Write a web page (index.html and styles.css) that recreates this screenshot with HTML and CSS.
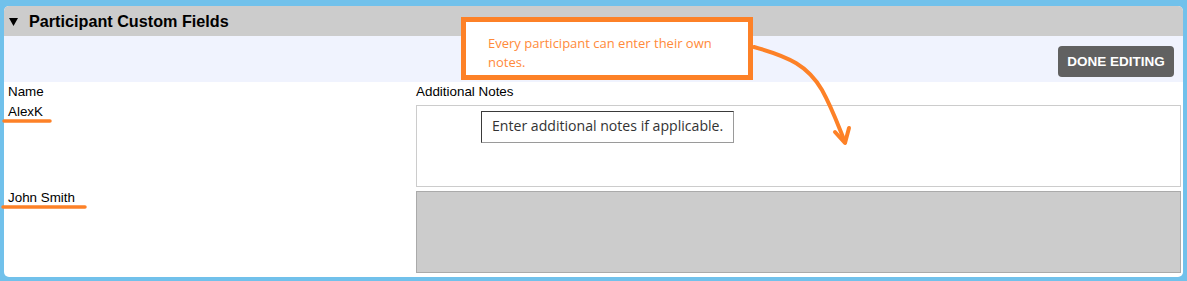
FILE: index.html
```html
<!DOCTYPE html>
<html>
<head>
<meta charset="utf-8">
<link rel="stylesheet" href="styles.css">
</head>
<body>
<div class="panel">
  <div class="panel-head">
    <svg class="caret" width="9" height="8" viewBox="0 0 9 8"><polygon points="0,0 9,0 4.5,8" fill="#000"/></svg>
    <span class="title">Participant Custom Fields</span>
  </div>
  <div class="toolbar">
    <button class="done-btn">DONE EDITING</button>
  </div>
  <div class="fields">
    <div class="col-head">Name</div>
    <div class="col-head">Additional Notes</div>
    <div class="name">AlexK</div>
    <div class="notes editable">
      <div class="tip">Enter additional notes if applicable.</div>
    </div>
    <div class="name">John Smith</div>
    <div class="notes locked"></div>
  </div>
</div>

<div class="callout">Every participant can enter their own notes.</div>
<svg class="annot" width="1187" height="281" viewBox="0 0 1187 281">
  <path d="M754 47 C 790 57, 808 66, 822 90 C 832 108, 838 125, 845 142" fill="none" stroke="#fd8127" stroke-width="4" stroke-linecap="round"/>
  <path d="M835 132 L 845 143 L 849 128" fill="none" stroke="#fd8127" stroke-width="4" stroke-linecap="round" stroke-linejoin="round"/>
  <line x1="4" y1="121" x2="50" y2="121" stroke="#fd8127" stroke-width="3.5" stroke-linecap="round"/>
  <line x1="3" y1="207" x2="85" y2="207" stroke="#fd8127" stroke-width="3.5" stroke-linecap="round"/>
</svg>
</body>
</html>
```

FILE: styles.css
```css
html, body {
  margin: 0;
  padding: 0;
}
body {
  background: #71c1eb;
  width: 1187px;
  height: 281px;
  box-sizing: border-box;
  padding: 6px 4px 4px 4px;
  font-family: "Liberation Sans", Arial, sans-serif;
  color: #000;
  overflow: hidden;
  position: relative;
}
.panel {
  background: #fff;
  height: 271px;
  border-radius: 5px;
  overflow: hidden;
  display: flex;
  flex-direction: column;
}
.panel-head {
  background: #cccccc;
  height: 30px;
  display: flex;
  align-items: center;
  padding-left: 5px;
  box-sizing: border-box;
}
.caret {
  display: block;
  margin-right: 11px;
  margin-top: 1px;
}
.title {
  font-weight: bold;
  font-size: 16.2px;
  line-height: 18px;
}
.toolbar {
  background: #f0f3fe;
  height: 46px;
  display: flex;
  justify-content: flex-end;
  align-items: flex-start;
  padding: 10px 9px 0 0;
  box-sizing: border-box;
}
.done-btn {
  background: #616161;
  color: #fff;
  border: none;
  border-radius: 4px;
  height: 31px;
  width: 116px;
  padding: 0;
  font-family: "Liberation Sans", Arial, sans-serif;
  font-weight: bold;
  font-size: 13.5px;
}
.fields {
  display: grid;
  grid-template-columns: 408px 1fr;
  padding: 2px 2px 0 4px;
  row-gap: 0;
}
.col-head {
  font-size: 13.4px;
  line-height: 15px;
  margin-bottom: 6px;
}
.name {
  font-size: 13.4px;
  line-height: 15px;
  margin-top: -1px;
}
.notes {
  height: 82px;
  box-sizing: border-box;
  margin-bottom: 4px;
}
.editable {
  border: 1px solid #cccccc;
  background: #fff;
  padding: 5px 0 0 64px;
}
.locked {
  background: #cccccc;
  border: 1px solid #aaaaaa;
}
.tip {
  display: inline-block;
  width: 253px;
  height: 32px;
  box-sizing: border-box;
  border: 1px solid #9a9a9a;
  border-top-color: #3a3a3a;
  border-left-color: #3a3a3a;
  font-family: "Open Sans", "Noto Sans", sans-serif;
  font-size: 14.1px;
  line-height: 28px;
  color: #333;
  padding-left: 10px;
  white-space: nowrap;
}
.callout {
  position: absolute;
  left: 461px;
  top: 17px;
  width: 292px;
  height: 63px;
  box-sizing: border-box;
  border: 5px solid #fd8127;
  background: #fff;
  color: #ff8a3a;
  font-family: "Open Sans", "Noto Sans", sans-serif;
  font-size: 13px;
  line-height: 19px;
  padding: 12px 10px 0 22px;
}
.annot {
  position: absolute;
  left: 0;
  top: 0;
  pointer-events: none;
}
```
